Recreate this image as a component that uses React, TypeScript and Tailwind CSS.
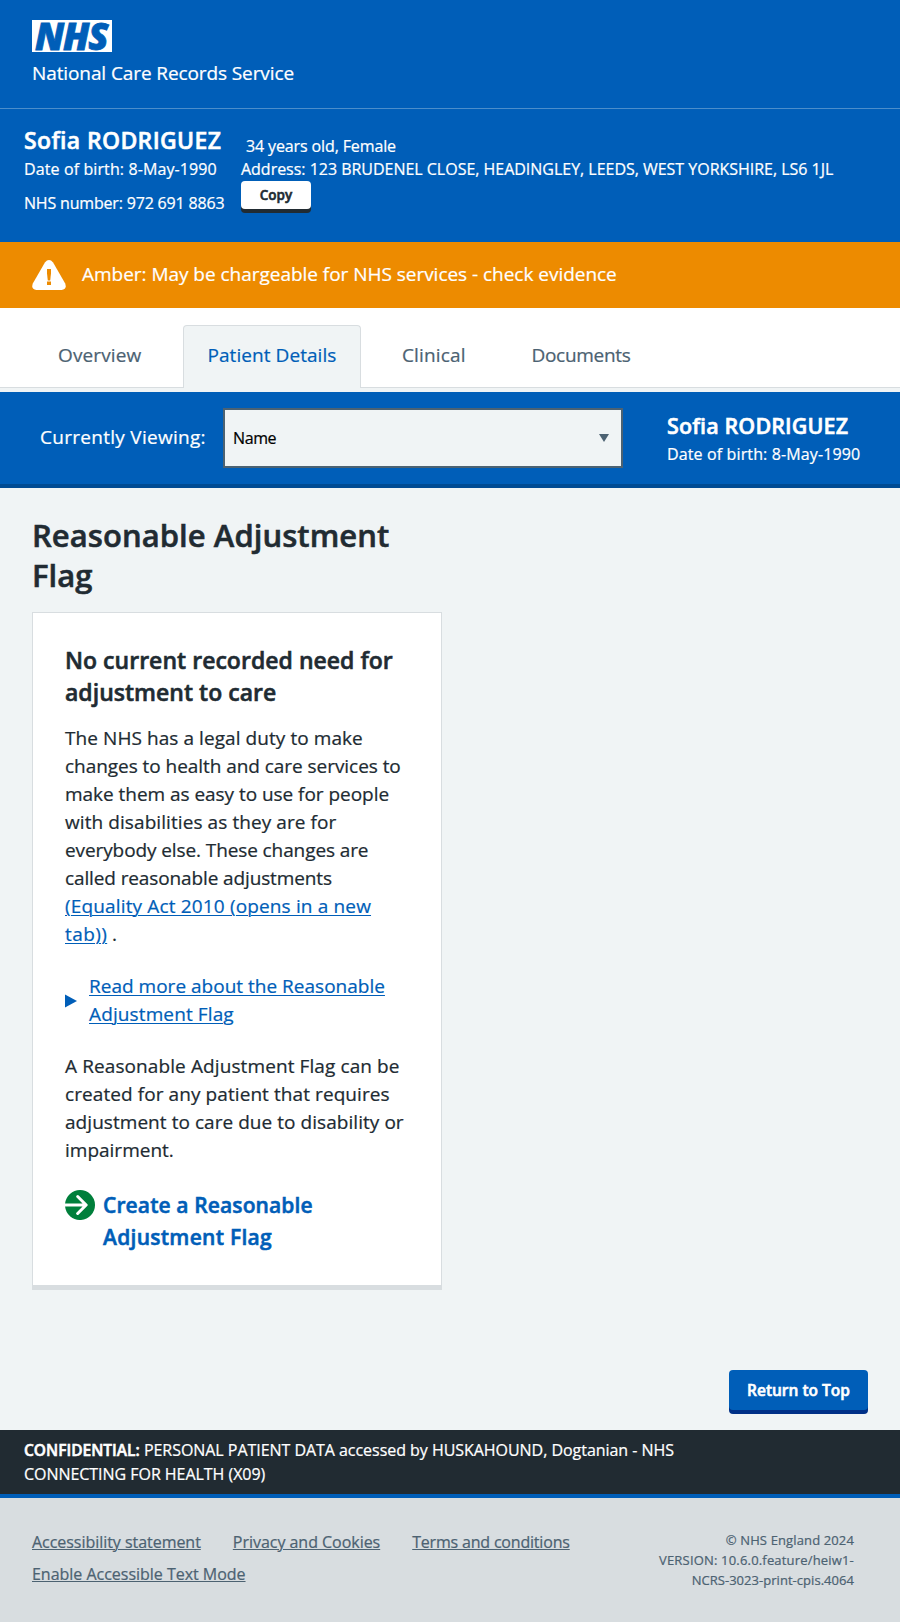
import React from "react";

type LineData = [text: string, tracking: string];

const headingLines: LineData[] = [
  ["No current recorded need for", "tracking-[0.03px]"],
  ["adjustment to care", "tracking-[0.02px]"],
];

const dutyLines: LineData[] = [
  ["The NHS has a legal duty to make", "tracking-[0.07px]"],
  ["changes to health and care services to", "tracking-[-0.05px]"],
  ["make them as easy to use for people", "tracking-[-0.04px]"],
  ["with disabilities as they are for", "tracking-[0.08px]"],
  ["everybody else. These changes are", "tracking-[-0.1px]"],
  ["called reasonable adjustments", "tracking-[-0.12px]"],
];

const flagLines: LineData[] = [
  ["A Reasonable Adjustment Flag can be", "tracking-[0.1px]"],
  ["created for any patient that requires", "tracking-[0.08px]"],
  ["adjustment to care due to disability or", "tracking-[0.05px]"],
  ["impairment.", "tracking-[0px]"],
];

const bold = "font-semibold [-webkit-text-stroke:0.55px]";

function Lines({ lines }: { lines: LineData[] }) {
  return (
    <>
      {lines.map(([text, tracking]) => (
        <span key={text} className={`block whitespace-nowrap ${tracking}`}>
          {text}
        </span>
      ))}
    </>
  );
}

function NhsLogo() {
  return (
    <div className="flex h-8 w-20 items-center bg-white pl-[3px]">
      <span className="text-[37px] leading-8 font-extrabold tracking-[-1.2px] text-[#005eb8] italic [-webkit-text-stroke:0.8px]">
        NHS
      </span>
    </div>
  );
}

function Header() {
  return (
    <header className="flex h-[109px] flex-col border-b border-[#4b8ecb] px-8 pt-5">
      <NhsLogo />
      <span className="mt-[7px] text-[19px] leading-7 tracking-[-0.1px]">National Care Records Service</span>
    </header>
  );
}

function PatientBanner() {
  return (
    <section className="flex h-[133px] px-6 pt-[15px] text-base leading-6">
      <div className="w-[217px]">
        <h2 className={`mb-px text-[23px] leading-8 tracking-[0.36px] ${bold}`}>Sofia RODRIGUEZ</h2>
        <p className="tracking-[0.11px]">Date of birth: 8-May-1990</p>
        <p className="mt-2.5 tracking-[-0.18px]">NHS number: 972 691 8863</p>
      </div>
      <div className="flex flex-col items-start pt-2.5">
        <p className="-mb-px pl-[5px] tracking-[-0.12px]">34 years old, Female</p>
        <p className="whitespace-nowrap tracking-[-0.02px]">
          Address: 123 BRUDENEL CLOSE, HEADINGLEY, LEEDS, WEST YORKSHIRE, LS6 1JL
        </p>
        <button className={`h-7 w-[70px] rounded bg-white text-[13.5px] text-[#212b32] shadow-[0_4px_0_#212b32] ${bold}`}>
          Copy
        </button>
      </div>
    </section>
  );
}

function AmberAlert() {
  return (
    <section className="flex h-[66px] items-center bg-[#ed8b00] pl-8 text-[19px] leading-7 text-white">
      <svg width="34" height="30" viewBox="0 0 34 30" className="mr-4">
        <path
          d="M12.9 2.4 Q17 -2.2 21.1 2.4 L33.2 23.6 Q35.2 29.6 29.6 30 H4.4 Q-1.2 29.6 0.8 23.6 Z"
          fill="#fff"
        />
        <path d="M15 9h4v4.5l-0.8 7h-2.4l-0.8-7z" fill="#ed8b00" />
        <rect x="15" y="21.5" width="4" height="3.5" fill="#ed8b00" />
      </svg>
      <span className="pb-0.5 tracking-[-0.03px]">Amber: May be chargeable for NHS services - check evidence</span>
    </section>
  );
}

function Tabs() {
  return (
    <nav className="h-[84px] bg-[#f0f4f5]">
      <div className="flex h-20 items-end border-b border-[#d8dde0] bg-white text-[19px] leading-7 text-[#4c6272]">
        <a className="h-[46px] w-[183px] pl-[58px] tracking-[0.12px]">Overview</a>
        <a className="-mb-px h-[63px] w-[178px] rounded-t border border-b-0 border-[#d8dde0] bg-[#f0f4f5] pt-[15px] pl-[23.5px] tracking-[0.06px] text-[#005eb8]">
          Patient Details
        </a>
        <a className="h-[46px] w-[170px] pl-[41px] tracking-[0.15px]">Clinical</a>
        <a className="h-[46px] pl-[0.5px] tracking-[-0.3px]">Documents</a>
      </div>
    </nav>
  );
}

function ViewBar() {
  return (
    <section className="flex h-24 items-center border-b-4 border-[#004b93] bg-[#005eb8] pl-10 text-white">
      <label className="w-[183px] pb-[3px] text-[19px] leading-7 tracking-[0.28px]">Currently Viewing:</label>
      <div className="flex h-[60px] w-[400px] items-center justify-between border-2 border-[#4c6272] bg-[#f0f4f5] pr-3 pl-2 text-base text-black">
        <span className="tracking-[-0.4px]">Name</span>
        <svg width="10" height="8" viewBox="0 0 10 8">
          <path d="M0 0h10L5 8z" fill="#4c6272" />
        </svg>
      </div>
      <div className="ml-11 h-[68px] pt-2">
        <p className={`text-[21.5px] leading-7 tracking-[0.12px] ${bold}`}>Sofia RODRIGUEZ</p>
        <p className="mt-0.5 text-base leading-6 tracking-[0.13px]">Date of birth: 8-May-1990</p>
      </div>
    </section>
  );
}

const linkClass = "text-[#005eb8] underline decoration-1 underline-offset-2";

function FlagCard() {
  return (
    <article className="w-[410px] border border-b-[5px] border-[#d8dde0] bg-white px-8 pt-[31px] pb-8 text-[19px] leading-7">
      <h2 className={`mb-4 text-[23px] leading-8 ${bold}`}>
        <Lines lines={headingLines} />
      </h2>
      <p className="mb-6">
        <Lines lines={dutyLines} />
        <a className={linkClass}>
          <span className="tracking-[0.15px]">(Equality Act 2010 (opens in a new</span>
          <br />
          <span className="tracking-[0.4px]">tab))</span>
        </a>{" "}
        .
      </p>
      <div className="mb-6 flex items-center">
        <svg width="12" height="14" viewBox="0 0 12 14" className="mt-0.5 mr-3">
          <path d="M0 0.5 12 7 0 13.5z" fill="#005eb8" />
        </svg>
        <a className={linkClass}>
          <span className="tracking-[0.01px]">Read more about the Reasonable</span>
          <br />
          <span className="tracking-[0.12px]">Adjustment Flag</span>
        </a>
      </div>
      <p className="mb-[25px]">
        <Lines lines={flagLines} />
      </p>
      <a className={`flex text-[21px] leading-8 text-[#005eb8] ${bold}`}>
        <svg width="30" height="30" viewBox="2 2 20 20" className="mt-px mr-2">
          <path
            fill="#007f3b"
            d="M12 2a10 10 0 0 0-9.95 9h11.64L9.74 7.05a1 1 0 0 1 1.41-1.41l5.66 5.65a1 1 0 0 1 0 1.42l-5.66 5.65a1 1 0 0 1-1.41 0 1 1 0 0 1 0-1.41L13.69 13H2.05A10 10 0 1 0 12 2z"
          />
        </svg>
        <span>
          <span className="block tracking-[0.12px]">Create a Reasonable</span>
          <span className="block tracking-[0.28px]">Adjustment Flag</span>
        </span>
      </a>
    </article>
  );
}

const footerLink = "underline decoration-1 underline-offset-1";

function Footer() {
  return (
    <footer>
      <div className="border-b-4 border-[#005eb8] bg-[#212b32] px-6 py-2 text-base leading-6 text-white">
        <p>
          <strong className={`text-[15.5px] tracking-[0px] ${bold}`}>CONFIDENTIAL:</strong>{" "}
          <span className="tracking-[-0.04px]">
            PERSONAL PATIENT DATA accessed by HUSKAHOUND, Dogtanian - NHS
            <br />
            CONNECTING FOR HEALTH (X09)
          </span>
        </p>
      </div>
      <div className="flex h-[124px] justify-between bg-[#d8dde0] pt-8 pr-[46px] pl-8 text-base leading-6 text-[#4c6272]">
        <div className="flex flex-col gap-2">
          <div className="flex gap-8">
            <a className={`tracking-[-0.04px] ${footerLink}`}>Accessibility statement</a>
            <a className={`tracking-[-0.03px] ${footerLink}`}>Privacy and Cookies</a>
            <a className={`tracking-[-0.19px] ${footerLink}`}>Terms and conditions</a>
          </div>
          <div className="flex">
            <a className={`tracking-[-0.02px] ${footerLink}`}>Enable Accessible Text Mode</a>
          </div>
        </div>
        <div className="text-right text-[13px] leading-5">
          <p className="tracking-[0.13px]">© NHS England 2024</p>
          <p className="tracking-[0.18px]">VERSION: 10.6.0.feature/heiw1-</p>
          <p className="tracking-[0.04px]">NCRS-3023-print-cpis.4064</p>
        </div>
      </div>
    </footer>
  );
}

export default function App() {
  return (
    <div className="flex min-h-[1622px] w-[900px] flex-col bg-[#f0f4f5] font-['Open_Sans',sans-serif] text-[#212b32] [-webkit-text-stroke:0.22px]">
      <div className="bg-[#005eb8] text-white">
        <Header />
        <PatientBanner />
      </div>
      <AmberAlert />
      <Tabs />
      <ViewBar />
      <main className="flex h-[942px] flex-col px-8 pt-[27px] pb-5">
        <h1 className={`mb-[17px] text-[31px] leading-10 tracking-[0.06px] ${bold}`}>
          Reasonable Adjustment
          <br />
          Flag
        </h1>
        <FlagCard />
        <button
          className={`mt-auto h-10 w-[139px] self-end rounded bg-[#005eb8] pt-0.5 text-[15.5px] text-white shadow-[0_4px_0_#003087] ${bold}`}
        >
          Return to Top
        </button>
      </main>
      <Footer />
    </div>
  );
}
